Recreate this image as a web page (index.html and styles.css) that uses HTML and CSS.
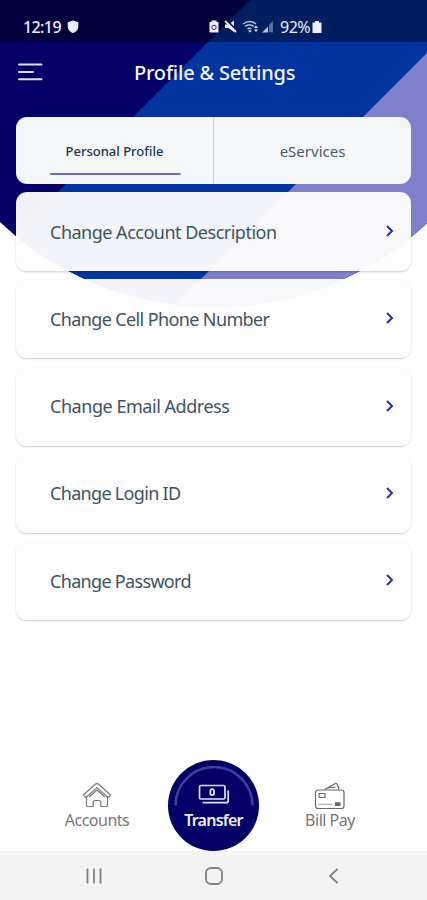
FILE: index.html
```html
<!DOCTYPE html>
<html lang="en">
<head>
    <meta charset="UTF-8">
    <meta name="viewport" content="width=device-width, initial-scale=1.0">
    <title>Profile &amp; Settings</title>
    <link rel="stylesheet" href="styles.css">
</head>
<body>
    <!-- curved header background -->
    <svg class="backdrop" viewBox="0 0 427 310">
        <clipPath id="curve"><circle cx="214" cy="-5" r="312"/></clipPath>
        <g clip-path="url(#curve)">
            <path fill="#000066" d="M0 0H427V310H0z"/>
            <path fill="#0035a0" d="M250 0H427V310H-60z"/>
            <path fill="#8080cc" d="M480 0V310H170z"/>
        </g>
    </svg>

    <div class="status-bar">
        <span class="time">12:19</span>
        <svg class="shield" width="12" height="14" viewBox="0 0 12 14"><path fill="#eef" d="M6 .5l5.3 1.700v4.600c0 3-2.200 5-5.300 6.500C2.900 11.800.7 9.800.7 6.800V2.200z"/></svg>
        <svg class="signals" width="66" height="15" viewBox="0 0 66 15">
            <path fill="#eef" d="M1.500 3h2V1.500h5V3h2v10.500h-9z"/>
            <circle cx="6" cy="8.300" r="2.200" fill="none" stroke="#334" stroke-width="1"/>
            <path fill="#eef" d="M17 5.500h3.500L26 1.500v11.500l-5.500-4H17z"/>
            <path stroke="#001d60" stroke-width="2" d="M18.500 1l10.500 11"/>
            <path stroke="#eef" stroke-width="1.800" d="M17 2l11 11"/>
            <g fill="none" stroke="#b8c2dc" stroke-width="1.500">
                <path d="M35 5q6.500-5 13 0M37 7.500q4.500-3.500 9 0M39.500 10q2-1.500 4 0"/>
            </g>
            <path fill="#eef" d="M40 11.500h4l-2 2zM46 9h4l-2-2.500zM46 10.500h4L48 13z"/>
            <path fill="#53719e" d="M65 2v11.500h-4V6z"/>
            <path fill="#b8c2dc" d="M54 13.500l6-6v6z"/>
        </svg>
        <span class="battery-text">92%</span>
        <svg width="10" height="14" viewBox="0 0 10 14"><path fill="#eef" d="M3 1h4v1.500h2.500V13H.5V2.500H3z"/></svg>
    </div>

    <div class="header">
        <svg class="menu" width="25" height="18" viewBox="0 0 25 18"><path stroke="#dde" stroke-width="2" stroke-linecap="round" d="M1 1.500h22.500M1 9h14M1 16.200h22.500"/></svg>
        <h1>Profile &amp; Settings</h1>
    </div>

    <div class="tabs">
        <div class="tab active"><span>Personal Profile</span></div>
        <div class="tab"><span>eServices</span></div>
    </div>

    <div class="list">
        <div class="item">
            <span class="account">Change Account Description</span>
            <svg class="arrow" viewBox="0 0 8 12"><path d="M1 1l5 5-5 5"/></svg>
        </div>
        <div class="item">
            <span class="phone">Change Cell Phone Number</span>
            <svg class="arrow" viewBox="0 0 8 12"><path d="M1 1l5 5-5 5"/></svg>
        </div>
        <div class="item">
            <span class="email">Change Email Address</span>
            <svg class="arrow" viewBox="0 0 8 12"><path d="M1 1l5 5-5 5"/></svg>
        </div>
        <div class="item">
            <span class="login">Change Login ID</span>
            <svg class="arrow" viewBox="0 0 8 12"><path d="M1 1l5 5-5 5"/></svg>
        </div>
        <div class="item">
            <span class="password">Change Password</span>
            <svg class="arrow" viewBox="0 0 8 12"><path d="M1 1l5 5-5 5"/></svg>
        </div>
    </div>

    <div class="bottom-nav">
        <div class="nav-item">
            <svg width="30" height="26" viewBox="0 0 30 26" fill="none" stroke="#77777a" stroke-width="1.200" stroke-linejoin="round">
                <path d="M1.500 13L13.200 2.300q1.800-1.500 3.600 0L28.500 13l-2.300 2.500L15 5.600 3.800 15.500z"/>
                <path d="M4.500 15v8.200q0 1.300 1.300 1.300h5.400v-4q0-2 2-2h3.600q2 0 2 2v4h5.400q1.300 0 1.300-1.300V15M7 15l8-7 8 7"/>
            </svg>
            <span>Accounts</span>
        </div>
        <div class="nav-item transfer">
            <svg class="ring" width="80" height="40" viewBox="0 0 80 40"><path fill="none" stroke="#40409a" stroke-width="2.500" d="M1.500 39.500a38.500 38.500 0 0 1 77 0"/></svg>
            <svg width="32" height="21" viewBox="0 0 32 21" fill="none" stroke="#dfe1f5" stroke-width="1.700">
                <rect x="1.500" y="1.500" width="25.500" height="13.500" rx="1.500"/>
                <path d="M4.500 18.700h23.700q2 0 2-2V6.500"/>
                <ellipse cx="14.200" cy="8.200" rx="2" ry="3"/>
            </svg>
            <span>Transfer</span>
        </div>
        <div class="nav-item billpay">
            <svg width="32" height="28" viewBox="0 0 32 28" fill="none" stroke="#68686b" stroke-width="1.200" stroke-linejoin="round">
                <rect x="1.500" y="8" width="28.500" height="18.500" rx="2.500"/>
                <path d="M10.500 7.500L21 1.700q1.500-.8 2.200.7l1.500 3.300v2M13.500 6l8-1M5 11.500h6v4H5z"/>
                <path stroke="#aaa" d="M4.500 22.300H18"/>
                <path fill="#68686b" d="M21.500 20.800h4.500v2.500h-4.500z"/>
            </svg>
            <span>Bill Pay</span>
        </div>
    </div>

    <div class="system-nav">
        <svg width="18" height="18" viewBox="0 0 18 18"><path d="M2.500 1.500v15M9 1.500v15M15.500 1.500v15"/></svg>
        <svg width="18" height="18" viewBox="0 0 18 18"><rect x="1" y="1" width="16" height="16" rx="5"/></svg>
        <svg width="18" height="18" viewBox="0 0 18 18"><path d="M12.500 2L5 9l7.500 7"/></svg>
    </div>
</body>
</html>
```
FILE: styles.css
```css
* {
    box-sizing: border-box;
}

body {
    position: relative;
    display: flex;
    flex-direction: column;
    width: 427px;
    height: 900px;
    margin: 0;
    overflow: hidden;
    font-family: 'Noto Sans', sans-serif;
    background-color: #fff;
}

svg {
    display: block;
    flex-shrink: 0;
}

span, h1 {
    white-space: nowrap;
}

.backdrop {
    position: absolute;
    top: 0;
    left: 0;
    width: 427px;
    height: 310px;
    z-index: -1;
}

.status-bar {
    display: flex;
    align-items: center;
    height: 42px;
    padding: 11px 0 0 23px;
    background-color: rgba(0, 0, 0, 0.4);
    color: #eef;
    font-size: 15px;
}

.time {
    width: 44px;
    font-size: 16px;
    font-weight: 500;
    letter-spacing: -0.6px;
}

.signals {
    margin: 0 6px 0 129px;
}

.battery-text {
    width: 32px;
    font-size: 16px;
    letter-spacing: -0.5px;
}

.header {
    display: flex;
    align-items: center;
    height: 75px;
    padding: 0 18px 15px;
    color: #f4f4ff;
}

.header h1 {
    margin: 0 0 0 91px;
    font-size: 20px;
    font-weight: 500;
    letter-spacing: -0.2px;
}

.tabs {
    display: flex;
    height: 67px;
    margin: 0 16px 8px;
    border-radius: 11px;
    background-color: #f4f6f8;
}

.tab {
    position: relative;
    flex: 1;
    display: flex;
    align-items: center;
    justify-content: center;
    padding-top: 1px;
    color: #4b5c69;
    font-size: 15px;
}

.tab.active {
    border-right: 1px solid #cfd2d5;
    color: #203746;
    font-size: 13px;
    font-weight: 500;
}

.tab.active::after {
    content: "";
    position: absolute;
    left: 34px;
    bottom: 9px;
    width: 131px;
    height: 2px;
    border-radius: 1px;
    background-color: #7468c8;
}

.list {
    display: flex;
    flex-direction: column;
    gap: 8.3px;
    margin: 0 16px;
}

.item {
    display: flex;
    align-items: center;
    justify-content: space-between;
    height: 79px;
    padding: 0 17px 0 34px;
    border-radius: 11px;
    background-color: rgba(253, 253, 253, 0.955);
    box-shadow: 0 1px 2px rgba(0, 0, 0, 0.2);
    color: #40545f;
    font-size: 18px;
}

.account {
    letter-spacing: -0.5px;
}

.phone {
    letter-spacing: -0.62px;
}

.email {
    letter-spacing: -0.46px;
}

.login, .password {
    letter-spacing: -0.68px;
}

.arrow {
    width: 8px;
    height: 12px;
    margin-bottom: 1px;
    fill: none;
    stroke: #2630a0;
    stroke-width: 2;
}

.bottom-nav {
    display: flex;
    justify-content: center;
    height: 91px;
    margin-top: auto;
}

.nav-item {
    display: flex;
    flex-direction: column;
    align-items: center;
    width: 142px;
    padding-top: 22px;
    color: #77777a;
    font-size: 16px;
    letter-spacing: -0.5px;
    line-height: 24px;
}

.nav-item.transfer {
    position: relative;
    width: 91px;
    height: 91px;
    padding-top: 24px;
    border-radius: 50%;
    background-color: #000066;
    color: #eef;
    font-weight: 600;
    letter-spacing: -0.75px;
}

.nav-item.transfer span {
    margin-top: 3px;
}

.ring {
    position: absolute;
    top: 6px;
    left: 5.5px;
}

.nav-item.billpay span {
    margin-top: -2px;
}

.system-nav {
    display: flex;
    justify-content: center;
    gap: 102px;
    height: 49px;
    padding-top: 16px;
    background-color: #f4f4f4;
}

.system-nav svg {
    fill: none;
    stroke: #808080;
    stroke-width: 1.8;
}
```
